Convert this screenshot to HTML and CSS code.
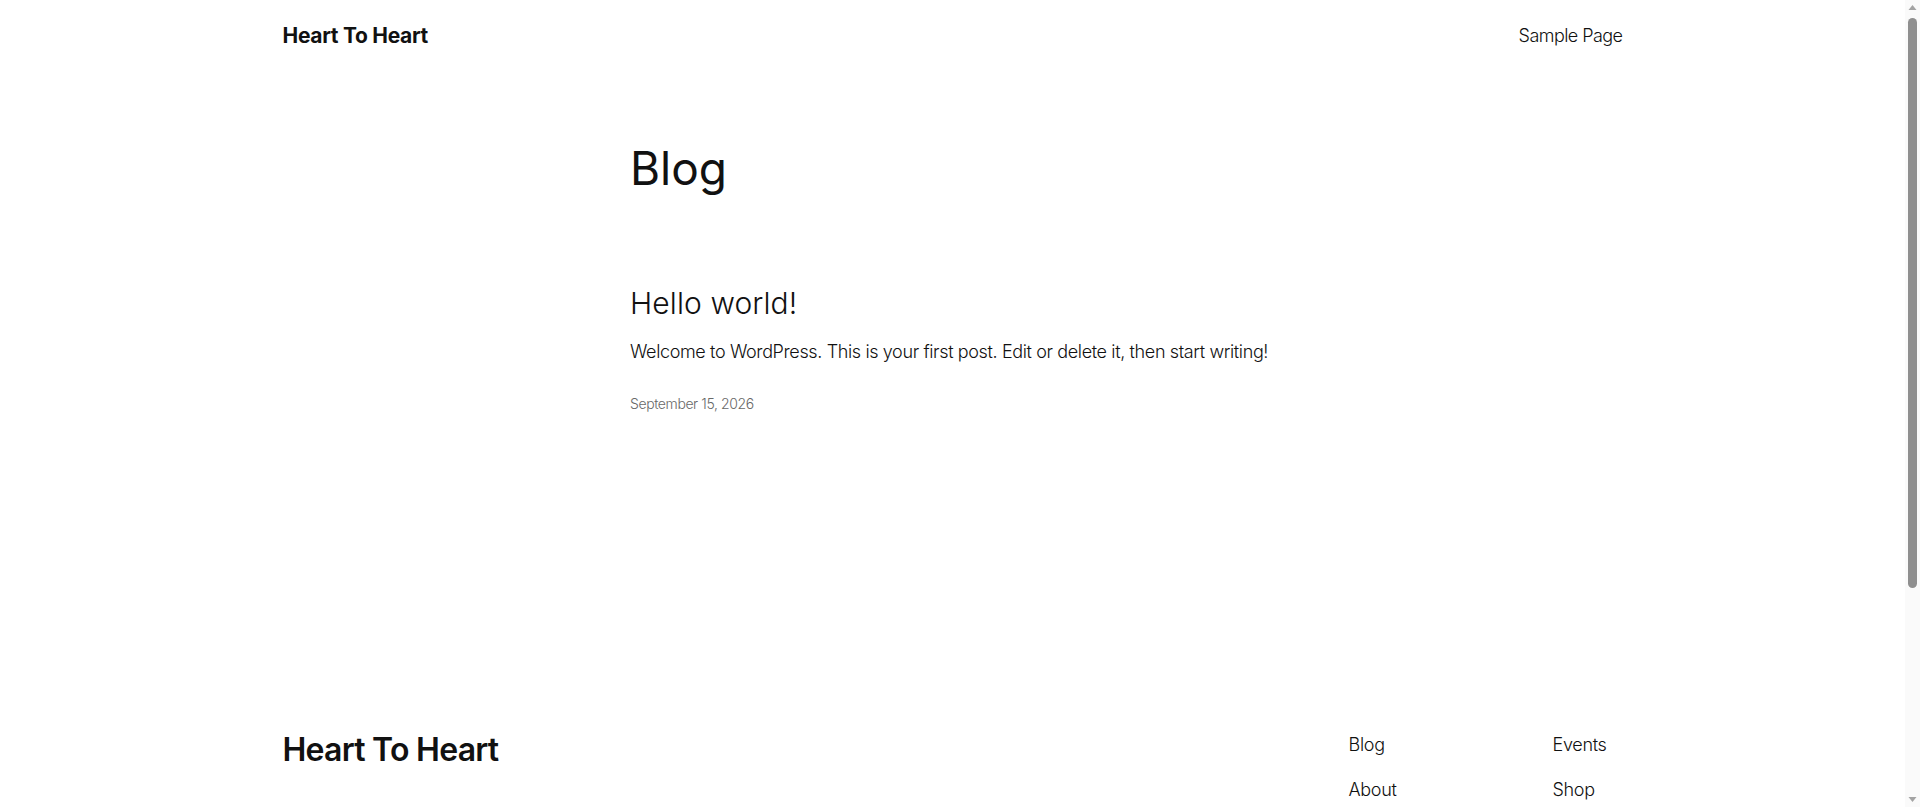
FILE: index.html
```html
<!DOCTYPE html>
<html lang="en">
<head>
<meta charset="utf-8">
<title>Blog – Heart To Heart</title>
<link rel="stylesheet" href="styles.css">
</head>
<body>
<header class="site-header">
  <a class="site-title" href="#">Heart To Heart</a>
  <nav class="header-nav"><a href="#">Sample Page</a></nav>
</header>
<main class="site-main">
  <h1 class="page-title">Blog</h1>
  <article class="post">
    <h2 class="post-title"><a href="#">Hello world!</a></h2>
    <p class="post-excerpt">Welcome to WordPress. This is your first post. Edit or delete it, then start writing!</p>
    <time class="post-date">September 15, 2026</time>
  </article>
</main>
<footer class="site-footer">
  <div class="footer-top">
    <a class="footer-title" href="#">Heart To Heart</a>
    <div class="footer-navs">
      <ul class="footer-col">
        <li><a href="#">Blog</a></li>
        <li><a href="#">About</a></li>
        <li><a href="#">FAQs</a></li>
        <li><a href="#">Authors</a></li>
      </ul>
      <ul class="footer-col">
        <li><a href="#">Events</a></li>
        <li><a href="#">Shop</a></li>
        <li><a href="#">Patterns</a></li>
        <li><a href="#">Themes</a></li>
      </ul>
    </div>
  </div>
  <div class="footer-bottom">
    <span>Twenty Twenty-Five</span>
    <span>Designed with <a href="#">WordPress</a></span>
  </div>
</footer>
<div class="scrollbar" aria-hidden="true">
  <svg class="sb-arrow" width="15" height="15" viewBox="0 0 15 15"><path d="M3.5 10 L7.5 5 L11.5 10 Z" fill="#a3a3a3"/></svg>
  <div class="sb-track"><div class="sb-thumb"></div></div>
  <svg class="sb-arrow" width="15" height="15" viewBox="0 0 15 15"><path d="M3.5 5 L7.5 10 L11.5 5 Z" fill="#a3a3a3"/></svg>
</div>
</body>
</html>
```
FILE: styles.css
```css
* { box-sizing: border-box; }
html, body { margin: 0; background: #ffffff; }
body {
  padding: 0 15px 0 0;
  font-family: Inter, "Noto Sans", "Liberation Sans", sans-serif;
  color: #111111;
  font-weight: 300;
  letter-spacing: -0.1px;
}
a { color: inherit; text-decoration: none; }

.site-header {
  max-width: 1340px;
  margin: 0 auto;
  height: 71px;
  display: flex;
  align-items: center;
  justify-content: space-between;
}
.site-title {
  font-size: 21px;
  font-weight: 700;
  line-height: 1.2;
  letter-spacing: -0.3px;
}
.header-nav a {
  font-size: 18px;
  line-height: 1.5;
  letter-spacing: -0.55px;
}

.site-main {
  width: 645px;
  margin: 0 auto;
  padding-top: 70px;
  min-height: 660px;
}
.page-title {
  margin: 0;
  font-size: 46px;
  font-weight: 400;
  line-height: 1.2;
  letter-spacing: 0;
}
.post { padding-top: 88.6px; display: flex; flex-direction: column; }
.post-title {
  margin: 0;
  font-size: 30px;
  font-weight: 350;
  line-height: 1.2;
  letter-spacing: 0.1px;
}
.post-excerpt {
  margin: 17.3px 0 0;
  font-size: 18px;
  line-height: 1.5;
  letter-spacing: -0.37px;
  white-space: nowrap;
}
.post-date {
  margin-top: 28.4px;
  font-size: 14px;
  line-height: 1.5;
  color: #686868;
  font-weight: 300;
  letter-spacing: -0.4px;
}

.site-footer {
  max-width: 1340px;
  margin: 0 auto;
  padding-bottom: 60px;
}
.footer-top {
  display: flex;
  justify-content: space-between;
  align-items: flex-start;
}
.footer-title {
  font-size: 32px;
  font-weight: 600;
  line-height: 1.2;
  letter-spacing: -0.75px;
}
.footer-navs {
  display: grid;
  grid-template-columns: 204px 70px;
}
.footer-col {
  list-style: none;
  margin: 0;
  padding: 0;
  display: flex;
  flex-direction: column;
  gap: 18px;
  font-size: 18px;
  line-height: 1.5;
  letter-spacing: -0.3px;
}
.footer-bottom {
  margin-top: 110px;
  display: flex;
  justify-content: space-between;
  font-size: 14px;
  line-height: 1.4;
  color: #111111;
}
.footer-bottom a { text-decoration: underline; }

/* browser scrollbar drawn over the right edge */
.scrollbar {
  position: fixed;
  top: 0;
  right: 0;
  width: 15px;
  height: 100vh;
  background: #fafafa;
  display: flex;
  flex-direction: column;
}
.sb-arrow { display: block; flex: none; }
.sb-track { flex: 1; padding: 3px 3px 0; }
.sb-thumb {
  width: 9px;
  height: 570px;
  border-radius: 5px;
  background: #8f8f8f;
}
```
